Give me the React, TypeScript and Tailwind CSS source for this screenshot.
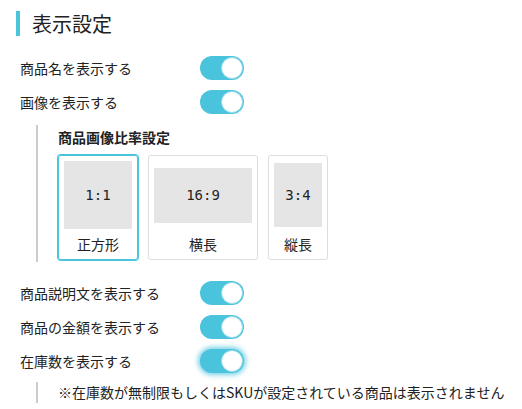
import React from "react";

const jp = { fontFamily: '"Noto Sans CJK JP", "Noto Sans", sans-serif' };

function Toggle({ glow = false }: { glow?: boolean }) {
  return (
    <div
      className={
        "flex h-[24px] w-[44px] items-center justify-end rounded-full bg-[#4ac3dc] p-px " +
        (glow ? "shadow-[0_0_5px_2px_rgba(74,195,220,0.75)]" : "")
      }
    >
      <div className="h-[22px] w-[22px] rounded-full border border-[#9adcea] bg-white" />
    </div>
  );
}

function Row({ label, glow }: { label: string; glow?: boolean }) {
  return (
    <div className="flex h-[24px] items-center pl-1">
      <span className="w-[180px] text-[14px] leading-none text-[#222]">{label}</span>
      <Toggle glow={glow} />
    </div>
  );
}

function Card({
  w,
  h,
  ratio,
  label,
  selected,
}: {
  w: number;
  h: number;
  ratio: string;
  label: string;
  selected?: boolean;
}) {
  return (
    <div
      className={
        "flex flex-col rounded-[3px] border px-[5px] pt-[5px] " +
        (selected
          ? "border-[#4ac3dc] shadow-[0_0_0_1px_#4ac3dc]"
          : "border-[#dddddd]")
      }
    >
      <div className="flex h-[68px] items-center justify-center">
        <div
          className="flex items-center justify-center bg-[#e5e5e5] text-[14px] text-[#222]"
          style={{ width: w, height: h, fontFamily: '"DejaVu Sans Mono", monospace' }}
        >
          {ratio}
        </div>
      </div>
      <div className="flex h-[30px] items-center justify-center text-[14px] text-[#222]">
        {label}
      </div>
    </div>
  );
}

export default function App() {
  return (
    <div className="h-[409px] w-[522px] bg-white pl-4 pt-[11px]" style={jp}>
      <h2 className="flex h-[25px] items-center border-l-4 border-[#4ac3dc] pl-3 text-[20px] leading-none text-[#222]">
        表示設定
      </h2>
      <div className="mt-5 flex flex-col gap-[10px]">
        <Row label="商品名を表示する" />
        <Row label="画像を表示する" />
      </div>
      <div className="ml-5 mt-[11px] border-l-2 border-[#cccccc] pb-[2px] pl-5 pt-[2px]">
        <div className="h-[20px] text-[14px] font-bold leading-[20px] text-[#222]">
          商品画像比率設定
        </div>
        <div className="mt-[8px] flex items-center gap-[10px]">
          <Card w={68} h={68} ratio="1:1" label="正方形" selected />
          <Card w={98} h={55} ratio="16:9" label="横長" />
          <Card w={48} h={64} ratio="3:4" label="縦長" />
        </div>
      </div>
      <div className="mt-[19px] flex flex-col gap-[10px]">
        <Row label="商品説明文を表示する" />
        <Row label="商品の金額を表示する" />
        <Row label="在庫数を表示する" glow />
      </div>
      <div className="ml-5 mt-[9px] flex h-[21px] items-center border-l-2 border-[#cccccc] pl-5 text-[14px] text-[#222]">
        ※在庫数が無制限もしくはSKUが設定されている商品は表示されません
      </div>
    </div>
  );
}
